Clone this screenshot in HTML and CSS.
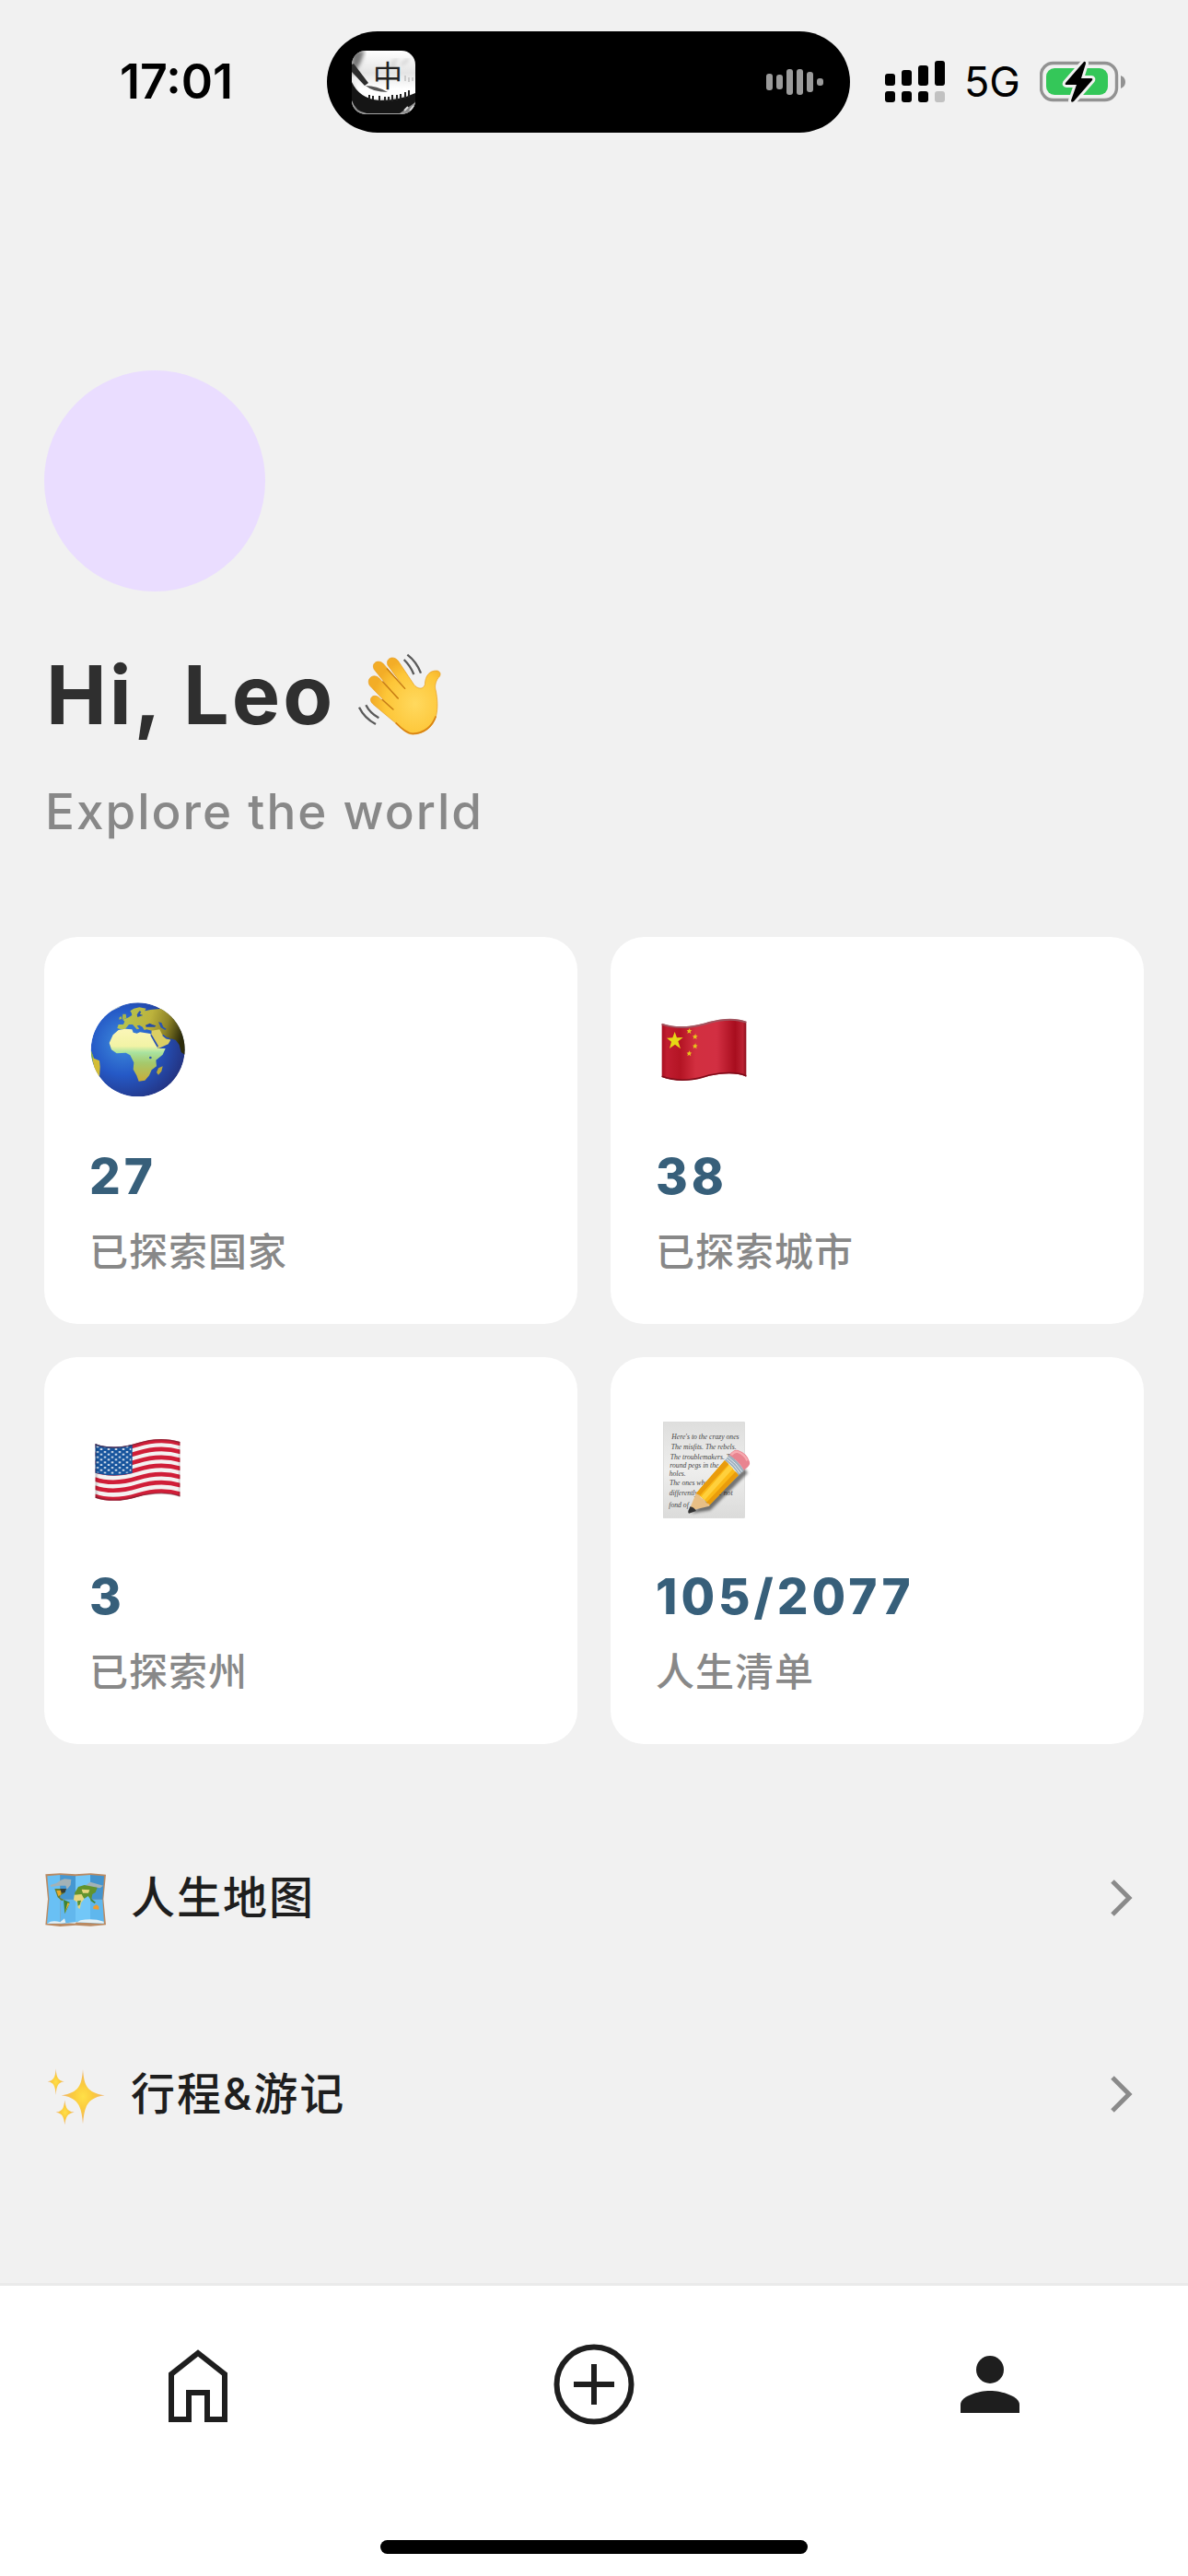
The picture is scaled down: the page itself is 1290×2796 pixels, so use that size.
FILE: index.html
```html
<!DOCTYPE html>
<html lang="zh-CN">
<head>
<meta charset="utf-8">
<meta name="viewport" content="width=device-width, initial-scale=1">
<title>Explore the world</title>
<link rel="stylesheet" href="styles.css">
</head>
<body>
<header class="status">
  <time class="status-time">17:01</time>
  <div class="island">
    <svg class="island-app" viewBox="0 0 69 69" aria-hidden="true">
      <defs>
        <clipPath id="app-clip"><rect width="69" height="69" rx="15"/></clipPath>
        <linearGradient id="app-bg" x1="0" y1="0" x2="0" y2="1"><stop offset="0" stop-color="#fff"/><stop offset=".35" stop-color="#e4e4e4"/><stop offset=".6" stop-color="#fff"/></linearGradient>
        <filter id="app-soft"><feGaussianBlur stdDeviation="2"/></filter>
      </defs>
      <g clip-path="url(#app-clip)">
        <rect width="69" height="69" fill="url(#app-bg)"/>
        <path d="M0 0h14l-4 12L2 26H0z" fill="#777" filter="url(#app-soft)"/>
        <path d="M42 14l8-5m4 6l8-6m-20 10l6-4" stroke="#bbb" stroke-width="2" filter="url(#app-soft)"/>
        <path d="M0 32q4 22 20 24l49-6v20H0z" fill="#888" filter="url(#app-soft)"/>
        <path d="M0 34q8 18 30 20 22 0 39-8v10L52 68H16Q4 66 0 54z" fill="#151515"/>
        <path d="M19 53v-5m4 5v-4m7 6v-6m6 6v-5m4 5v-5m4 5v-7m5 6v-6m4 5v-6m5 5v-7m4 6v-8" stroke="#222" stroke-width="2"/>
        <path d="M0 15l2-1 16 21-4 3L0 23z" fill="#2c2c2c"/>
        <path d="M15 38q12 0 24 7-16 0-24-7z" fill="#555"/>
        <path d="M58 27v6m4-4v5m4-5v4" stroke="#aaa" stroke-width="1"/>
        <path d="M57 65l4-4m2 4l4-5" stroke="#ddd" stroke-width="2"/>
        <text class="app-char" x="39" y="39">中</text>
      </g>
    </svg>
    <svg class="island-wave" viewBox="0 0 62 28" aria-hidden="true">
      <g fill="#9b9b9b"><rect y="5" width="7" height="18" rx="3"/><rect x="11" y="6" width="7" height="16" rx="3"/><rect x="22" width="7" height="28" rx="3"/><rect x="33" width="7" height="28" rx="3"/><rect x="44" y="3" width="7" height="22" rx="3"/><rect x="55" y="10" width="7" height="8" rx="3"/></g>
    </svg>
  </div>
  <div class="status-right">
    <svg class="signal" viewBox="0 0 65 46" aria-label="signal">
      <rect y="14" width="11" height="13" rx="3"/><rect x="18" y="10" width="11" height="17" rx="3"/><rect x="36" y="5" width="11" height="22" rx="3"/><rect x="54" width="11" height="27" rx="3"/>
      <rect y="33" width="11" height="12" rx="3"/><rect x="18" y="33" width="11" height="12" rx="3"/><rect x="36" y="33" width="11" height="12" rx="3"/><rect x="54" y="33" width="11" height="12" rx="3" fill="#c1c1c1"/>
    </svg>
    <span class="network">5G</span>
    <svg class="battery" viewBox="0 0 94 46" aria-label="charging">
      <rect x="1.5" y="2.5" width="82" height="40" rx="13" fill="none" stroke="#929292" stroke-width="3.4"/>
      <path d="M88 16q5 2 5 7t-5 7z" fill="#929292"/>
      <rect x="7" y="8" width="67" height="29" rx="9" fill="#34c759"/>
      <path d="M48 1L28 24q-1 2 1 2h11l-6 17q0 3 3 1l20-23q1-2-1-2H45l5-16q0-3-2-2z" fill="#000" stroke="#f1f1f1" stroke-width="6" paint-order="stroke"/>
    </svg>
  </div>
</header>

<main class="main">
  <div class="avatar" role="img" aria-label="Leo"></div>
  <h1 class="hello">Hi, Leo
    <svg class="hello-hand" viewBox="1071 48 288 288" aria-hidden="true">
      <defs><radialGradient id="skin" cx=".65" cy=".6" r=".6"><stop offset="0" stop-color="#ffd95e"/><stop offset=".7" stop-color="#fdc638"/><stop offset="1" stop-color="#f3ad27"/></radialGradient></defs>
      <path d="M1200 283L1128 223C1110 205 1128 188 1146 200L1192 240 1118 163C1104 142 1128 120 1148 138L1208 205 1132 110C1120 88 1148 74 1164 94L1232 172 1176 96C1168 74 1194 62 1210 82L1262 160C1272 172 1290 178 1297 160 1298 130 1312 112 1338 114 1350 118 1350 130 1340 138 1332 150 1328 165 1333 180 1338 205 1340 235 1334 260 1325 300 1290 322 1255 321 1235 320 1220 300 1200 283Z" fill="url(#skin)" stroke="#e79b1d" stroke-width="2"/>
      <path d="M1158 208l36 32M1160 150l50 54M1174 108l58 64" stroke="#c77d12" stroke-width="4" stroke-linecap="round" fill="none"/>
      <path d="M1202 283Q1235 318 1258 319 1312 316 1333 262" stroke="#d98413" stroke-width="5" fill="none"/>
      <path d="M1240 62Q1270 85 1284 122M1229 78Q1250 98 1261 126M1083 233Q1100 268 1137 288M1105 226Q1118 252 1147 268" fill="none" stroke="#5a5a5a" stroke-width="7"/>
    </svg>
  </h1>
  <p class="tagline">Explore the world</p>

  <section class="cards">
    <article class="card">
      <svg class="card-icon" viewBox="48 75 324 324" aria-hidden="true">
        <defs>
          <radialGradient id="sea" cx=".35" cy=".42" r=".7"><stop offset="0" stop-color="#3f8ede"/><stop offset=".5" stop-color="#2559c6"/><stop offset="1" stop-color="#23307c"/></radialGradient>
          <linearGradient id="africa" x1="0" y1="0" x2="0" y2="1"><stop offset="0" stop-color="#fbf6b8"/><stop offset=".33" stop-color="#f2f3a5"/><stop offset=".45" stop-color="#a9e3a0"/><stop offset=".65" stop-color="#a5c96c"/><stop offset="1" stop-color="#c9ac39"/></linearGradient>
          <linearGradient id="asia" x1="0" y1="0" x2="1" y2=".2"><stop offset="0" stop-color="#b5cb55"/><stop offset=".5" stop-color="#bcb23c"/><stop offset=".75" stop-color="#8f8528"/><stop offset="1" stop-color="#2c2b0a"/></linearGradient>
          <clipPath id="globe-clip"><circle cx="209" cy="238" r="153"/></clipPath>
        </defs>
        <g clip-path="url(#globe-clip)">
          <circle cx="209" cy="238" r="153" fill="url(#sea)"/>
          <path d="M116 104l20-12 24-4-10 12-26 12z" fill="#b9c9c9"/>
          <path d="M142 168L146 156 162 156 166 146 160 140 176 134 190 126 188 118 184 112 196 104 214 100 236 104 232 112 250 108 290 104 370 150V260L350 246 344 222 332 206 316 202 310 206 296 198 286 190 282 184 256 186 254 176 238 172 230 174 224 164 214 158 206 160 214 170 206 172 192 156 180 156 168 170 154 172Z" fill="url(#asia)"/>
          <path d="M234 158l14-6 8 4 12 4-4 4-28 0z" fill="#264ca4"/>
          <path d="M276 148l10 2 6 14 10 6-4 4-14-8zM206 124l8-12 6 2-4 8 10 4-18 6z" fill="#2b55b0"/>
          <path d="M254 176l26-4 8 16 14 12 14 6-8 14-32 14-24-36z" fill="#dccf63"/>
          <path d="M146 174l22-4 22 2 4 10 12 3 10-4 34 5 12 26 13 22 24 0-9 20-22 18 2 20-16 12-8 18-14 16-20 3-7-19-11-20 2-22-12-24-14-8-30 2-17-12-7-22 12-26z" fill="url(#africa)"/>
          <path d="M252 190l22 38" stroke="#2650b5" stroke-width="5"/>
          <path d="M290 190l12 10 10 2" stroke="#2650b5" stroke-width="5" fill="none"/>
          <path d="M290 292l-4 16-10 12-6-8 6-14z" fill="#b9a93d"/>
          <circle cx="250" cy="264" r="4" fill="#2c59b0"/>
          <path d="M160 122l10 0 2 14-14 4zM149 132l7-2 0 8-8 2z" fill="#a9b54a"/>
          <path d="M56 240l10 26 18 8 2 20-2 34-14-14z" fill="#d3bd36"/>
          <path d="M56 240l8 22-4 20z" fill="#7fae46"/>
        </g>
      </svg>
      <strong class="card-value">27</strong>
      <span class="card-label">已探索国家</span>
    </article>
    <article class="card">
      <svg class="card-icon" viewBox="63 75 324 324" aria-hidden="true">
        <defs><linearGradient id="cn"><stop offset="0" stop-color="#a90e20"/><stop offset=".06" stop-color="#c01d30"/><stop offset=".22" stop-color="#b41424"/><stop offset=".4" stop-color="#d22f40"/><stop offset=".65" stop-color="#d22f42"/><stop offset=".87" stop-color="#a80d1e"/><stop offset=".96" stop-color="#bb2334"/><stop offset="1" stop-color="#8c0d1b"/></linearGradient></defs>
        <path d="M86 153C140 172 195 162 240 148 285 136 330 135 361 147V326C330 312 285 314 240 323 190 340 135 345 86 327Z" fill="url(#cn)"/>
        <path d="M86 155C140 174 195 164 240 150 285 138 330 137 361 149" fill="none" stroke="#a15560" stroke-width="6"/>
        <path d="M361 323C330 310 285 312 240 321 190 338 135 343 86 325" fill="none" stroke="#7d0b18" stroke-width="5"/>
        <path d="M128 180l7 19 20-1-16 13 8 24-18-14-18 13 6-22-15-12 19-1z" fill="#e6d815"/>
        <path id="star" d="M177 168l1 6 6 1-5 4 2 7-6-4-6 3 2-6-4-4 6-1z" fill="#e6c51b"/>
        <use href="#star" x="19" y="18"/><use href="#star" x="19" y="49"/><use href="#star" y="73"/>
      </svg>
      <strong class="card-value">38</strong>
      <span class="card-label">已探索城市</span>
    </article>
    <article class="card">
      <svg class="card-icon" viewBox="48 63 324 324" aria-hidden="true">
        <defs>
          <clipPath id="us-clip"><path d="M70 141C120 160 170 150 209 138 250 125 300 120 347 135V314C300 299 250 305 209 314 165 328 115 332 70 317Z"/></clipPath>
          <path id="us-stripe" d="M68 147C120 166 170 156 209 144 250 131 300 126 349 141" fill="none" stroke="#d01e38" stroke-width="14"/>
          <pattern id="us-stars" width="24" height="17" patternUnits="userSpaceOnUse" x="71" y="145"><rect x="4" y="3" width="6" height="6" fill="#fff"/><rect x="16" y="11" width="6" height="6" fill="#fff"/></pattern>
          <linearGradient id="us-shade"><stop offset="0" stop-color="#000" stop-opacity=".25"/><stop offset=".05" stop-color="#000" stop-opacity="0"/><stop offset=".96" stop-color="#000" stop-opacity="0"/><stop offset="1" stop-color="#000" stop-opacity=".25"/></linearGradient>
        </defs>
        <g clip-path="url(#us-clip)">
          <rect x="68" y="120" width="282" height="215" fill="#f4f2f2"/>
          <use href="#us-stripe"/><use href="#us-stripe" y="27"/><use href="#us-stripe" y="54"/><use href="#us-stripe" y="81"/><use href="#us-stripe" y="109"/><use href="#us-stripe" y="136"/><use href="#us-stripe" y="164"/>
          <path d="M68 138Q130 160 191 143V237Q130 252 68 236Z" fill="#15539c"/>
          <path d="M72 147Q130 164 187 147V234Q130 246 72 234Z" fill="url(#us-stars)"/>
          <path d="M70 141C120 160 170 150 209 138 250 125 300 120 347 135M347 314C300 299 250 305 209 314 165 328 115 332 70 317" fill="none" stroke="#5b2130" stroke-opacity=".5" stroke-width="9"/>
          <rect x="68" y="120" width="282" height="215" fill="url(#us-shade)"/>
        </g>
      </svg>
      <strong class="card-value">3</strong>
      <span class="card-label">已探索州</span>
    </article>
    <article class="card">
      <svg class="card-icon" viewBox="63 63 324 324" aria-hidden="true">
        <defs>
          <linearGradient id="paper" x1="0" y1="0" x2="0" y2="1"><stop offset="0" stop-color="#dededd"/><stop offset=".5" stop-color="#eeeeed"/><stop offset="1" stop-color="#dbdbda"/></linearGradient>
          <filter id="memo-shadow"><feGaussianBlur stdDeviation="4"/></filter>
        </defs>
        <rect x="91" y="71" width="264" height="311" fill="url(#paper)" stroke="#d2d2d1" stroke-width="2"/>
        <g class="memo-text"><text x="118" y="125">Here's to the crazy ones</text><text x="116" y="158">The misfits. The rebels.</text><text x="113" y="192">The troublemakers. The</text><text x="112" y="220">round pegs in the</text><text x="110" y="245">holes.</text><text x="111" y="277">The ones who</text><text x="110" y="308">differently. They're not</text><text x="109" y="348">fond of</text></g>
        <path d="M182 368l62-10 122-122-10-14z" fill="#000" opacity=".5" filter="url(#memo-shadow)"/>
        <path d="M198 302L291 195 336 243 241 341Q220 318 198 302z" fill="#fbb917"/>
        <path d="M198 302L291 195 304 208 208 312zM231 333L326 232 336 243 241 341z" fill="#e99c0c"/>
        <path d="M214 314L306 210 318 222 225 325z" fill="#ffd03c"/>
        <path d="M198 302q5 6 10 5 4 14 15 14 0 10 18 17v6l-58 14-6-6z" fill="#e8bf85"/>
        <path d="M178 346q14 2 20 14l-24 8q-3-2-2-8z" fill="#333"/>
        <path d="M291 195l15-17q30 20 47 49l-17 16q-18-30-45-48z" fill="#9fb1bf"/>
        <path d="M296 190q27 18 45 48M301 184q28 20 47 49" stroke="#e2e9ed" stroke-width="3" fill="none"/>
        <path d="M306 178q14-20 28-16 30 10 38 38 4 12-19 27-17-29-47-49z" fill="#e98490"/>
        <path d="M312 178q12-14 22-10 22 8 30 28" stroke="#f7aab0" stroke-width="7" fill="none"/>
      </svg>
      <strong class="card-value">105/2077</strong>
      <span class="card-label">人生清单</span>
    </article>
  </section>

  <ul class="links">
    <li><a class="link" href="#map">
      <svg class="link-icon" viewBox="54 42 216 216" aria-hidden="true">
        <path d="M58 73l48-3 50 3 49-3 50 4-8 80 8 84-50 4-49-3-50 4-48-5 8-84z" fill="#ba8a62"/>
        <path d="M64 79l42-4v157l-43 2 7-80z" fill="#69c0f4"/><path d="M106 75l50 4v76H106z" fill="#4597d1"/><path d="M106 155h50v76l-50 3z" fill="#62b7ed"/><path d="M156 79l48-4v157l-48-3z" fill="#72c7f8"/><path d="M204 75l45 4-5 76h-40z" fill="#4494cd"/><path d="M204 155h40l5 78-45-1z" fill="#5fb7ed"/>
        <path d="M74 108l20-6 14-10 12-4 22 2-2 18-12 14-4-12-20 0-28 4zM190 108l14-10 42 12-10 8-34-4z" fill="#a3b2b6"/>
        <path d="M88 120h36l-4 14-14 8 0 8 12 6-6 4-14-12z" fill="#6b7d2c"/><path d="M94 126l18 0-4 14-8 4z" fill="#e6aa2c"/><path d="M106 120h20l-4 12-12 2z" fill="#354039"/>
        <path d="M117 156l20 8-4 12-12 26-2-24z" fill="#3f8434"/><path d="M130 166l7 2-10 18-6 16z" fill="#e0b53a"/>
        <path d="M153 134l12-20 20-6 42 8-6 16-10 6-4 20-10-14-12 8-16-12-14 2z" fill="#62932d"/><path d="M152 140l24-2 8 16-10 12-4 20-6-4-2-18-12-8zM176 122l26 2-4 10-18 0z" fill="#e7d67e"/>
        <path d="M162 160l12-2-4 14-6 4z" fill="#549038"/><path d="M204 150l10 8 8 6-4 4-12-8z" fill="#44863b"/><path d="M214 178l10-6 8 6 0 10-18-2z" fill="#ef9c2e"/>
        <path d="M64 233q16-12 42-4l14-12 4 14 30 2 18-10q40-8 76 4v6l-44-2-48-2-50 4z" fill="#e4f0f5"/>
      </svg>
      <span class="link-text">人生地图</span>
      <svg class="chevron" viewBox="0 0 24 40" aria-hidden="true"><path d="M2 2l18 18L2 38" fill="none" stroke="#8a8a8a" stroke-width="5"/></svg>
    </a></li>
    <li><a class="link" href="#trips">
      <svg class="link-icon" viewBox="54 681 216 216" aria-hidden="true">
        <defs><radialGradient id="spark"><stop offset="0" stop-color="#ffe048"/><stop offset=".45" stop-color="#fbcb3d"/><stop offset="1" stop-color="#eeb272"/></radialGradient></defs>
        <g fill="url(#spark)"><path d="M180 708C184 760 192 784 251 793 192 802 185 830 180 886 175 830 168 802 110 793 168 784 176 760 180 708z"/><path d="M92 706C94 734 98 745 119 748 98 751 94 764 92 792 90 764 86 751 65 748 86 745 90 734 92 706z"/><path d="M121 808C124 834 129 845 152 848 129 851 124 864 121 889 118 864 114 851 92 848 114 845 118 834 121 808z"/></g>
      </svg>
      <span class="link-text">行程&amp;游记</span>
      <svg class="chevron" viewBox="0 0 24 40" aria-hidden="true"><path d="M2 2l18 18L2 38" fill="none" stroke="#8a8a8a" stroke-width="5"/></svg>
    </a></li>
  </ul>
</main>

<footer class="dock">
  <nav class="tabs">
    <a class="tab" href="#home" aria-label="Home"><svg class="tab-icon" viewBox="0 0 96 96"><path d="M48 14L77 37V86H58V57H38V86H19V37Z" fill="none" stroke="#1e1e1e" stroke-width="6"/></svg></a>
    <a class="tab" href="#add" aria-label="Add"><svg class="tab-icon" viewBox="0 0 96 96"><circle cx="48" cy="48" r="40.5" fill="none" stroke="#1e1e1e" stroke-width="6"/><path d="M26 48h44M48 26v44" stroke="#1e1e1e" stroke-width="6"/></svg></a>
    <a class="tab" href="#me" aria-label="Profile" aria-current="page"><svg class="tab-icon" viewBox="0 0 96 96"><circle cx="48" cy="32" r="15" fill="#1e1e1e"/><path d="M16 79V70C16 61 35 55 48 55S80 61 80 70V79Z" fill="#1e1e1e"/></svg></a>
  </nav>
  <div class="home-bar"></div>
</footer>
</body>
</html>
```
FILE: styles.css
```css
* { box-sizing: border-box; }

body {
  margin: 0;
  min-height: 100vh;
  display: flex;
  flex-direction: column;
  background: #f1f1f1;
  color: #1e1e1e;
  font-family: Inter, "Noto Sans CJK SC", sans-serif;
}

svg { display: block; flex: none; }

/* status bar */
.status {
  display: grid;
  grid-template-columns: 355fr 568fr 367fr;
  align-items: center;
  padding-top: 34px;
  color: #000;
}
.status-time {
  padding-left: 130px;
  font-size: 52px;
  font-weight: 600;
  line-height: 64px;
}
.island {
  display: flex;
  align-items: center;
  justify-content: space-between;
  height: 110px;
  padding: 0 29px 0 27px;
  border-radius: 55px;
  background: #000;
}
.island-app { width: 69px; height: 69px; }
.app-char {
  font-family: "Noto Sans CJK SC", sans-serif;
  font-size: 32px;
  text-anchor: middle;
  fill: #222;
}
.island-wave { width: 62px; height: 28px; }
.status-right {
  display: flex;
  align-items: center;
  gap: 21px;
  padding-left: 38px;
}
.signal { width: 65px; height: 46px; }
.network { font-size: 45px; line-height: 56px; }
.battery { width: 94px; height: 46px; }

/* greeting */
.main {
  flex: 1;
  padding: 258px 48px 60px;
}
.avatar {
  width: 240px;
  height: 240px;
  border-radius: 50%;
  background: #eaddff;
}
.hello {
  display: flex;
  align-items: center;
  gap: 22px;
  margin: 58px 0 0;
  padding-left: 2px;
  font-size: 88px;
  font-weight: 700;
  line-height: 108px;
  letter-spacing: 3px;
  color: #2f2f2f;
}
.hello-hand { width: 96px; height: 96px; }
.tagline {
  margin: 40px 0 103px;
  padding-left: 1px;
  font-size: 53px;
  font-weight: 500;
  line-height: 66px;
  letter-spacing: 2px;
  color: #888;
}

/* statistics */
.cards {
  display: grid;
  grid-template-columns: 1fr 1fr;
  gap: 36px;
}
.card {
  display: flex;
  flex-direction: column;
  padding: 68px 48px 48px;
  border-radius: 36px;
  background: #fff;
}
.card-icon { width: 108px; height: 108px; }
.memo-text {
  font-family: "Liberation Serif", serif;
  font-size: 23px;
  font-style: italic;
  fill: #444;
}
.card-value {
  margin-top: 52px;
  padding-left: 1px;
  font-size: 53px;
  font-weight: 800;
  line-height: 64px;
  letter-spacing: 4px;
  color: #375f7a;
}
.card-label {
  margin-top: 20px;
  padding-left: 1px;
  font-size: 42px;
  font-weight: 500;
  line-height: 60px;
  letter-spacing: 1px;
  color: #888;
}

/* links */
.links {
  margin: 60px 0 0;
  padding: 0;
  list-style: none;
}
.link {
  display: flex;
  align-items: center;
  gap: 22px;
  height: 213px;
  padding-right: 12px;
  color: #1e1e1e;
  text-decoration: none;
}
.link-icon { width: 72px; height: 72px; }
.link-text {
  flex: 1;
  font-size: 48px;
  font-weight: 500;
  line-height: 60px;
  letter-spacing: 2px;
}
.chevron { width: 24px; height: 40px; }

/* bottom navigation */
.dock {
  padding: 59px 0 24px;
  border-top: 3px solid #eaeaea;
  background: #fff;
}
.tabs {
  display: grid;
  grid-template-columns: repeat(3, 1fr);
}
.tab { display: flex; justify-content: center; }
.tab-icon { width: 96px; height: 96px; }
.home-bar {
  width: 36%;
  height: 15px;
  margin: 121px auto 0;
  border-radius: 8px;
  background: #000;
}
```
